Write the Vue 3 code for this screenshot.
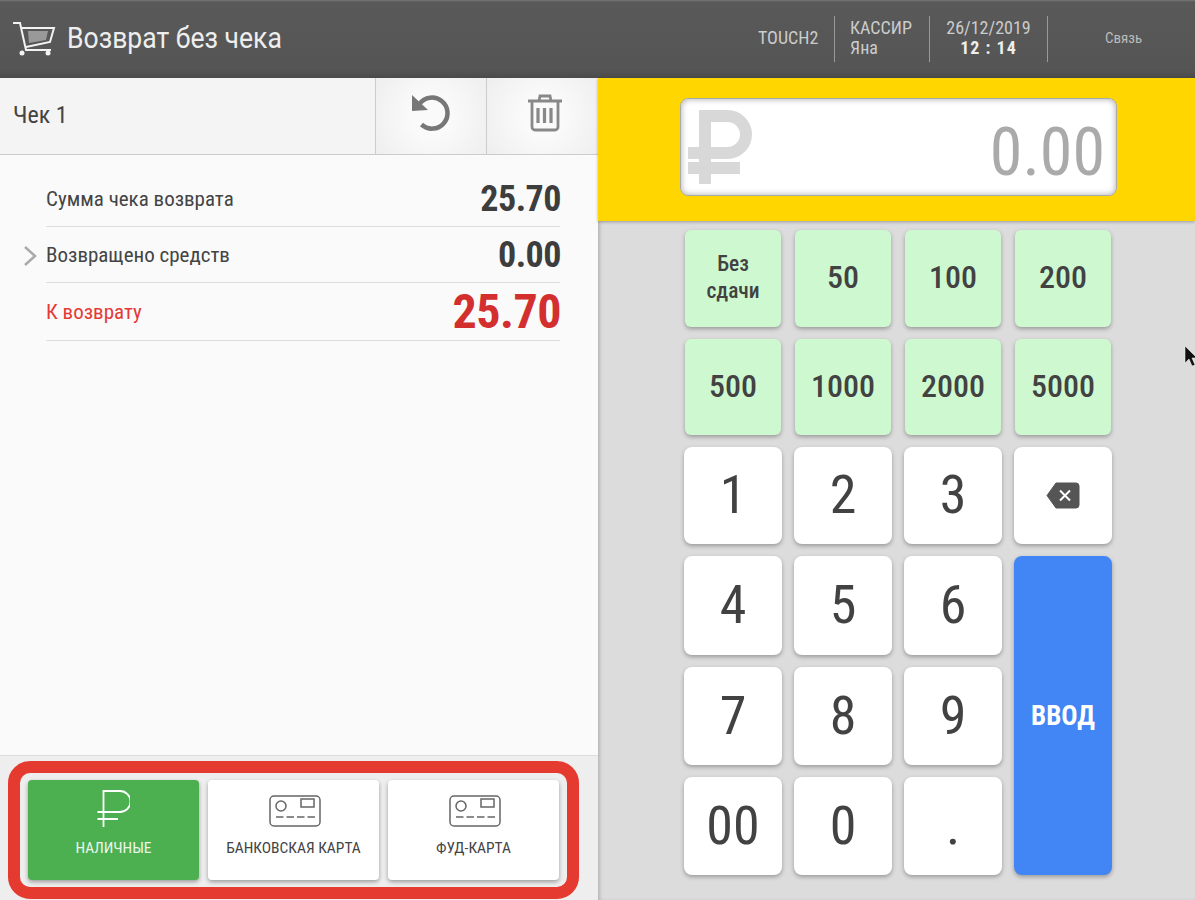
<script setup>
const quick = ['50', '100', '200', '500', '1000', '2000', '5000']
const digits = ['1', '2', '3', 'back', '4', '5', '6', 'enter', '7', '8', '9', '00', '0', '.']
const rows = [
  { label: 'Сумма чека возврата', value: '25.70', cls: 'big' },
  { label: 'Возвращено средств', value: '0.00', cls: 'big', arrow: true },
  { label: 'К возврату', value: '25.70', cls: 'due' },
]
</script>

<template>
  <div class="screen">
    <header class="top">
      <div class="title">
        <svg class="cart" width="44" height="36" viewBox="0 0 44 36" fill="none" stroke="#f2f2f2" stroke-width="2">
          <path d="M1 2h7l6 27h25" />
          <path d="M10 7h32l-4 14-24 5" />
          <path d="M16 10h20l-2 9-17 3z" fill="#999" stroke="none" />
          <circle cx="10" cy="32" r="2.500" fill="#f2f2f2" stroke="none" />
          <circle cx="36" cy="32" r="2.500" fill="#f2f2f2" stroke="none" />
        </svg>
        <span>Возврат без чека</span>
      </div>
      <div class="info">
        <div class="cell touch"><span class="nar">TOUCH2</span></div>
        <div class="cell who"><span class="nar">КАССИР</span><span class="nar">Яна</span></div>
        <div class="cell when"><span class="nar">26/12/2019</span><b class="nar">12 : 14</b></div>
        <div class="cell link"><span class="nar">Связь</span></div>
      </div>
    </header>

    <main class="body">
      <section class="left">
        <div class="tabs">
          <div class="tab-name"><span class="nar">Чек 1</span></div>
          <button class="tool">
            <svg width="42" height="42" viewBox="0 0 42 42" fill="none" stroke="#777" stroke-width="4.500">
              <path d="M9.500 12A15.500 15.500 0 1 1 11.500 32.500" />
              <path d="M2 3v16l16-1z" fill="#777" stroke="none" />
            </svg>
          </button>
          <button class="tool">
            <svg class="trash" width="36" height="40" viewBox="0 0 36 40" fill="none" stroke="#888" stroke-width="2.800">
              <path d="M1 8h34M12 8l1-5h10l1 5" />
              <path d="M5 9v25a3 3 0 0 0 3 3h20a3 3 0 0 0 3-3V9" />
              <path d="M11 15v15M17.500 15v15M24 15v15" stroke-width="3.200" />
            </svg>
          </button>
        </div>
        <div class="sums">
          <div v-for="r in rows" :key="r.label" class="sum" :class="r.cls">
            <svg v-if="r.arrow" class="chev" width="14" height="22" viewBox="0 0 14 22" fill="none" stroke="#aaa" stroke-width="2.500">
              <path d="M2 2l10 9-10 9" />
            </svg>
            <span class="nar sum-label">{{ r.label }}</span>
            <b class="nar sum-val">{{ r.value }}</b>
          </div>
        </div>
        <footer class="pay">
          <button class="pay-btn cash">
            <svg class="cash-icon" width="36" height="38" viewBox="0 0 36 38" fill="none" stroke="#fff" stroke-width="1.800">
              <path d="M9.500 37V1H26a10.500 10.500 0 0 1 0 21H3.500M3.500 29H24" />
            </svg>
            <span class="nar">НАЛИЧНЫЕ</span>
          </button>
          <button v-for="c in ['БАНКОВСКАЯ КАРТА', 'ФУД-КАРТА']" :key="c" class="pay-btn">
            <svg class="card-icon" width="52" height="33" viewBox="0 0 52 33" fill="none" stroke="#666" stroke-width="1.500">
              <rect x="1" y="1" width="50" height="30" rx="4" />
              <circle cx="12" cy="11" r="5" />
              <rect x="32" y="4" width="13" height="8" />
              <path d="M7 22h40" stroke-dasharray="7.500 3" />
            </svg>
            <span class="nar">{{ c }}</span>
          </button>
        </footer>
        <div class="mark"></div>
      </section>

      <section class="right">
        <div class="yellow">
          <div class="amount">
            <svg class="rub" width="66" height="76" viewBox="0 0 66 76" fill="none" stroke="#d8d8d8" stroke-width="12">
              <path d="M18 76V8h22.500a18.500 18.500 0 0 1 0 37H1M1 60h52" />
            </svg>
            <span class="nar">0.00</span>
          </div>
        </div>
        <div class="keys">
          <button class="key green small"><span class="nar">Без<br>сдачи</span></button>
          <button v-for="q in quick" :key="q" class="key green"><span class="nar">{{ q }}</span></button>
          <template v-for="d in digits" :key="d">
            <button v-if="d === 'back'" class="key">
              <svg width="34" height="27" viewBox="0 0 34 27">
                <path d="M10 1h20a3 3 0 0 1 3 3v19a3 3 0 0 1-3 3H10L1 13.500z" fill="#555" stroke="#555" stroke-linejoin="round" />
                <path d="M14 8.500l10 10M24 8.500L14 18.500" stroke="#fff" stroke-width="2" />
              </svg>
            </button>
            <button v-else-if="d === 'enter'" class="key enter"><span class="nar">ВВОД</span></button>
            <button v-else class="key digit"><span class="nar">{{ d }}</span></button>
          </template>
        </div>
        <svg class="pointer" width="14" height="24" viewBox="0 0 14 24">
          <path d="M1 1v17l4-4 3 7 3-1-3-7h5z" fill="#111" stroke="#fff" stroke-width="0.500" />
        </svg>
      </section>
    </main>
  </div>
</template>

<style>
body { background: #dcdcdc; }
</style>

<style scoped>
.screen {
  width: 1195px;
  height: 900px;
  overflow: hidden;
  font-family: Roboto, "Liberation Sans", sans-serif;
  color: #444;
}
.nar {
  display: inline-block;
  font-stretch: 75%;
}
button {
  border: 0;
  padding: 0;
  font-family: inherit;
  color: inherit;
}
.top {
  height: 78px;
  box-sizing: border-box;
  background: linear-gradient(#777 0, #595959 2px, #555 70px, #4a4a4a 78px);
  display: flex;
  align-items: center;
  justify-content: space-between;
  color: #ccc;
}
.title {
  display: flex;
  align-items: center;
  gap: 11px;
  padding-left: 12px;
  font-size: 29px;
  color: #eee;
}
.title span {
  display: inline-block;
  padding-bottom: 3px;
  transform: scaleX(0.915);
  transform-origin: left;
}
.info {
  display: flex;
  align-items: center;
  height: 46px;
  font-size: 18px;
}
.cell {
  height: 100%;
  display: flex;
  flex-direction: column;
  justify-content: center;
  line-height: 20px;
  padding-bottom: 2px;
  border-right: 1px solid #999;
  box-sizing: border-box;
}
.touch { width: 78px; padding-left: 1px; }
.who { width: 95px; padding-left: 15px; }
.when { width: 118px; align-items: center; }
.when b { color: #eee; letter-spacing: 1px; }
.link {
  width: 147px;
  border: 0;
  padding-left: 57px;
  font-size: 15px;
  color: #bbb;
}
.body {
  display: flex;
  height: 822px;
}
.left {
  width: 598px;
  display: flex;
  flex-direction: column;
  background: #fafafa;
  position: relative;
}
.tabs {
  display: flex;
  height: 77px;
  background: #f4f4f4;
  border-bottom: 1px solid #ccc;
  box-sizing: border-box;
}
.tab-name {
  flex: 1;
  padding: 0 0 3px 13px;
  display: flex;
  align-items: center;
  font-size: 24px;
}
.tool {
  width: 111px;
  border-left: 1px solid #ccc;
  background: radial-gradient(circle, #fafafa 30%, #eee);
  display: flex;
  align-items: center;
  justify-content: center;
  padding-bottom: 6px;
}
.tool + .tool { width: 112px; }
.trash { margin-left: 5px; }
.sums {
  flex: 1;
  padding: 16px 38px 0 46px;
}
.sum {
  display: flex;
  align-items: center;
  justify-content: space-between;
  height: 56px;
  box-sizing: border-box;
  border-bottom: 1px solid #ddd;
  position: relative;
  font-size: 21px;
}
.sum-val {
  font-size: 36px;
  font-weight: 700;
  color: #3d3d3d;
  letter-spacing: -0.5px;
  margin-right: -1px;
}
.due { height: 58px; color: #e53935; }
.due .sum-val { font-size: 48px; color: #d32f2f; }
.chev {
  position: absolute;
  left: -23px;
  top: 18px;
}
.pay {
  height: 145px;
  background: #eee;
  border-top: 1px solid #ddd;
  box-sizing: border-box;
  display: flex;
  gap: 9px;
  padding: 24px 39px 20px 28px;
}
.pay-btn {
  flex: 1;
  background: #fff;
  border-radius: 4px;
  box-shadow: 0 2px 4px rgba(0, 0, 0, 0.35);
  display: flex;
  flex-direction: column;
  align-items: center;
  justify-content: flex-end;
  gap: 11px;
  padding-bottom: 23px;
  font-size: 15.500px;
}
.cash {
  background: #4caf50;
  color: #eaf6ea;
}
.cash-icon { margin-left: -3px; }
.card-icon { margin-left: 2px; }
.mark {
  position: absolute;
  left: 8px;
  top: 683px;
  width: 571px;
  height: 138px;
  box-sizing: border-box;
  border: 12px solid #e53a30;
  border-radius: 22px;
  pointer-events: none;
}
.right {
  flex: 1;
  background: #dcdcdc;
  position: relative;
  box-shadow: inset 3px 0 4px -2px rgba(0, 0, 0, 0.25);
}
.yellow {
  height: 143px;
  background: #ffd600;
  padding: 20px 78px 0 82px;
  box-sizing: border-box;
  box-shadow: 0 1px 3px rgba(0, 0, 0, 0.3);
}
.amount {
  height: 98px;
  background: #fff;
  border-radius: 8px;
  border: 1px solid #aaa;
  box-sizing: border-box;
  box-shadow: inset 0 0 6px rgba(0, 0, 0, 0.35);
  display: flex;
  align-items: center;
  justify-content: flex-end;
  padding: 10px 11px 0 0;
  font-size: 66px;
  color: #aaa;
  position: relative;
}
.rub {
  position: absolute;
  left: 6px;
  top: 9px;
}
.keys {
  display: grid;
  grid-template-columns: repeat(4, 98px);
  grid-template-rows: 97px 96px 97px 99px 98px 98px;
  gap: 12px;
  padding: 9px 0 0 86px;
}
.key {
  background: #fff;
  border-radius: 8px;
  box-shadow: 0 2px 4px rgba(0, 0, 0, 0.3);
  display: flex;
  align-items: center;
  justify-content: center;
  font-size: 32px;
  font-weight: 500;
  color: #424242;
}
.green {
  background: #cef9d0;
  border-radius: 6px;
  margin: 0 1px;
  padding-bottom: 3px;
}
.small { font-size: 21.500px; line-height: 27px; }
.digit { font-size: 54px; font-weight: 400; padding-bottom: 2px; }
.enter {
  grid-row: 4 / span 3;
  grid-column: 4;
  background: #4285f4;
  color: #fff;
  font-size: 27px;
  font-weight: 700;
}
.pointer {
  position: absolute;
  left: 586px;
  top: 267px;
}
</style>
